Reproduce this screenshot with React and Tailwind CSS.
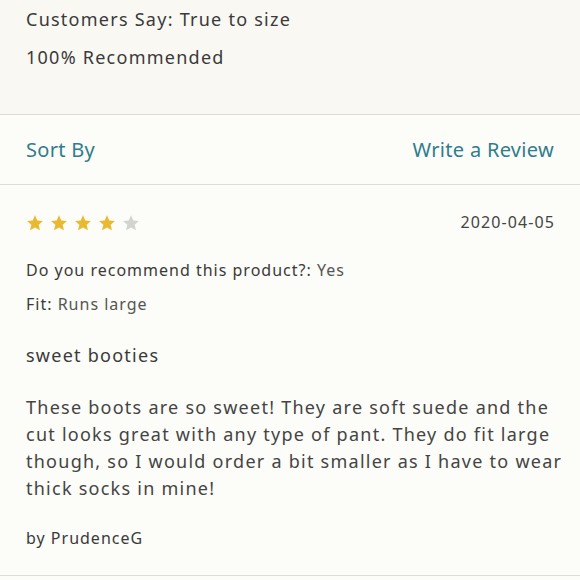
import React from "react";

function Star({ filled }) {
  return (
    <svg width="18" height="18" viewBox="0 0 24 24" className="block">
      <path
        d="M12 1.8l3.1 6.9 7.4.7-5.6 5 1.7 7.4L12 17.9l-6.6 3.9 1.7-7.4-5.6-5 7.4-.7z"
        fill={filled ? "#e9b932" : "#d3d3d1"}
      />
    </svg>
  );
}

export default function App() {
  return (
    <div
      className="w-[580px] h-[580px] overflow-hidden bg-[#fcfcf8] text-[#3a3a3a]"
      style={{ fontFamily: "'Noto Sans', sans-serif" }}
    >
      <div className="bg-[#f9f8f3] px-[26px] pt-[6px] pb-[44px] border-b border-[#dddcd6] flex flex-col gap-[12px]">
        <div className="text-[18px] leading-[26px] tracking-[1.25px]">Customers Say: True to size</div>
        <div className="text-[18px] leading-[26px] tracking-[1.25px]">100% Recommended</div>
      </div>
      <div className="flex justify-between items-center px-[26px] py-[21px] border-b border-[#dddcd6] text-[#2f7d8c] text-[20px] leading-[27px] tracking-[0.3px]">
        <span>Sort By</span>
        <span>Write a Review</span>
      </div>
      <div className="px-[26px] pt-[27px] pb-[25px] border-b border-[#dddcd6]">
        <div className="flex justify-between items-center h-[22px]">
          <div className="flex gap-[6px]">
            <Star filled />
            <Star filled />
            <Star filled />
            <Star filled />
            <Star />
          </div>
          <span className="text-[16px] text-[#444] tracking-[1.1px] -mt-[3px] -mr-[1px]">2020-04-05</span>
        </div>
        <div className="mt-[24px] text-[16px] leading-[24px] tracking-[1px]">
          Do you recommend this product?: <span className="text-[#555]">Yes</span>
        </div>
        <div className="mt-[10px] text-[16px] leading-[24px] tracking-[1px]">
          Fit: <span className="text-[#555]">Runs large</span>
        </div>
        <div className="mt-[26px] text-[18px] leading-[26px] tracking-[1.25px]">sweet booties</div>
        <p className="mt-[26px] text-[18px] leading-[27px] text-[#444] tracking-[1.25px] whitespace-nowrap">
          These boots are so sweet! They are soft suede and the<br />cut looks great with any type of pant. They do fit large<br />though, so I would order a bit smaller as I have to wear<br />thick socks in mine!
        </p>
        <div className="mt-[24px] text-[16px] leading-[24px] tracking-[1px]">by PrudenceG</div>
      </div>
    </div>
  );
}
